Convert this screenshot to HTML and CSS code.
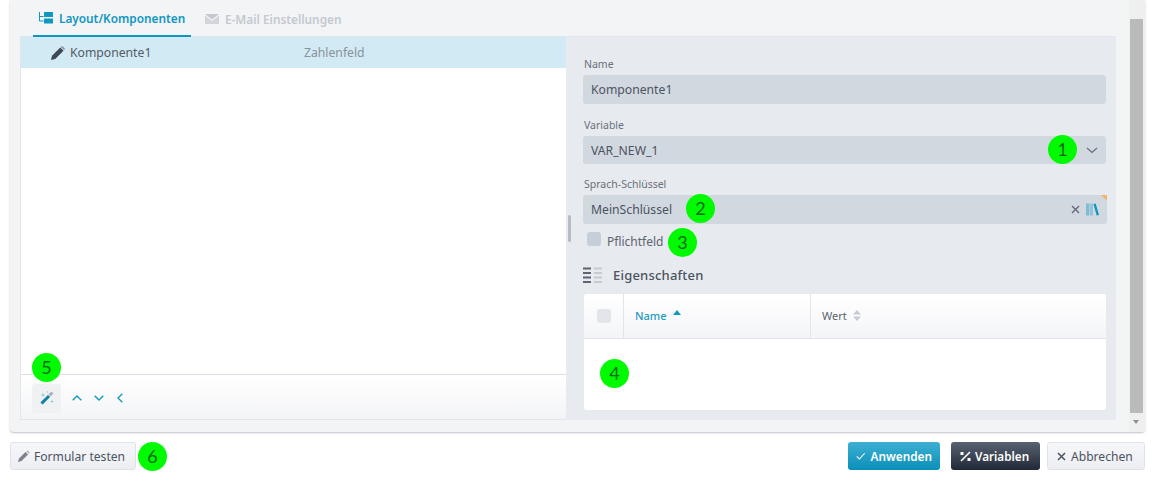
FILE: index.html
```html
<!DOCTYPE html>
<html lang="de">
<head>
<meta charset="utf-8">
<title>Formular</title>
<link rel="stylesheet" href="styles.css">
</head>
<body>
<main class="dialog">
  <div class="content">
    <nav class="tabs">
      <a class="tab active">
        <svg class="tab-icon" viewBox="0 0 14 12"><path d="M.5 0v9h4M.5 4.500h4" fill="none" stroke="#0e97c0"/><rect x="5" y="0" width="9" height="5" rx=".5" fill="#0e97c0"/><rect x="5" y="6.500" width="9" height="5" rx=".5" fill="#0e97c0"/></svg>
        Layout/Komponenten
      </a>
      <a class="tab muted">
        <svg class="tab-icon" viewBox="0 0 14 12"><path d="M0 1h14L7 6.500z" fill="#c4c9d0"/><path d="M0 2.500V11h14V2.500L7 8z" fill="#d2d6db"/></svg>
        E-Mail Einstellungen
      </a>
    </nav>
    <div class="split">
      <section class="list">
        <div class="row">
          <svg class="pencil" viewBox="0 0 14 14"><path d="M0 14l1-4.200L9.300 1.500l3.200 3.200L4.200 13z" fill="#3f4754"/><path d="M10.100.7c.6-.6 1.300-.6 1.900 0l1.300 1.300c.6.600.6 1.300 0 1.900l-.2.200-3.200-3.200z" fill="#8a919c"/></svg>
          <span class="row-name">Komponente1</span>
          <span class="row-type">Zahlenfeld</span>
        </div>
        <div class="list-space"></div>
        <div class="toolbar">
          <button class="wand">
            <svg viewBox="0 0 14 14" width="14" height="14"><path d="M1.500 12.500l7.500-7.500" stroke="#0e7fa8" stroke-width="3"/><path d="M9.500 4.500l3-3" stroke="#a9b2bd" stroke-width="3"/><path d="M3 2l.5 1.500L5 4l-1.500.500L3 6l-.5-1.500L1 4l1.500-.500zM12 9l.4 1.100 1.100.4-1.100.4L12 12l-.4-1.100-1.100-.4 1.100-.4zM7.500 0l.3.800.7.200-.7.300-.3.700-.3-.700L6.500 1l.700-.200z" fill="#6fb9d4"/></svg>
          </button>
          <button class="nav-btn"><svg viewBox="0 0 10 6" width="10" height="6"><path d="M.7 5.300L5 1l4.300 4.300" class="chev"/></svg></button>
          <button class="nav-btn"><svg viewBox="0 0 10 6" width="10" height="6"><path d="M.7.700L5 5l4.300-4.300" class="chev"/></svg></button>
          <button class="nav-btn"><svg viewBox="0 0 6 10" width="6" height="10"><path d="M5.300.700L1 5l4.300 4.300" class="chev"/></svg></button>
        </div>
      </section>
      <section class="detail">
        <span class="splitter"></span>
        <div class="field">
          <label class="label">Name</label>
          <div class="input">Komponente1</div>
        </div>
        <div class="field">
          <label class="label">Variable</label>
          <div class="input select">VAR_NEW_1
            <svg class="select-arrow" viewBox="0 0 12 7" width="12" height="7"><path d="M1 1l5 4.500L11 1" fill="none" stroke="#69717d" stroke-width="1.300"/></svg>
          </div>
        </div>
        <div class="field key-field">
          <label class="label">Sprach-Schlüssel</label>
          <div class="input key">MeinSchlüssel
            <span class="key-icons">
              <svg viewBox="0 0 9 9" width="9" height="9"><path d="M1 1l7 7M8 1L1 8" stroke="#5f6773" stroke-width="1.300"/></svg>
              <svg viewBox="0 0 14 13" width="13" height="13"><rect x="0" y="0" width="3.500" height="13" fill="#7fbcd6"/><rect x="4" y="0" width="3.500" height="13" fill="#8ec5dc"/><path d="M8 .5l2.400-.5L14 12.500l-2.500.5z" fill="#0e97c0"/></svg>
            </span>
            <span class="corner"></span>
          </div>
        </div>
        <label class="check-line"><span class="checkbox"></span><span>Pflichtfeld</span></label>
        <h2 class="section-title">
          <svg viewBox="0 0 20 16" width="20" height="16"><path d="M0 1.500h8M0 6h8M0 10.500h8M0 15h8" stroke="#5d6572" stroke-width="2"/><path d="M11 1.500h8M11 6h8M11 10.500h8M11 15h8" stroke="#c6cbd2" stroke-width="2"/></svg>
          Eigenschaften
        </h2>
        <div class="grid">
          <div class="grid-head">
            <div class="cell cell-check"><span class="checkbox light"></span></div>
            <div class="cell cell-name">Name <svg viewBox="0 0 8 5" width="8" height="5"><path d="M0 5l4-5 4 5z" fill="#0e97c0"/></svg></div>
            <div class="cell cell-value">Wert <svg viewBox="0 0 8 11" width="8" height="11"><path d="M0 4.500L4 0l4 4.500zM0 6.500L4 11l4-4.500z" fill="#c6cbd2"/></svg></div>
          </div>
        </div>
      </section>
    </div>
  </div>
  <aside class="scrollbar">
    <span class="thumb"></span>
    <span class="down"></span>
  </aside>
</main>
<footer class="actions">
  <button class="btn test">
    <svg viewBox="0 0 12 12" width="12" height="12"><path d="M0 12l1-3.500L7.500 2l2.500 2.500L3.500 11z" fill="#7b828d"/><path d="M8.300 1.200c.7-.7 1.300-.7 1.900-.1l.7.700c.6.600.6 1.200-.1 1.900z" fill="#a8aeb6"/></svg>
    Formular testen
  </button>
  <span class="spacer"></span>
  <button class="btn primary"><svg viewBox="0 0 12 10" width="12" height="10"><path d="M1 5.500l3.300 3.300L11 1.500" fill="none" stroke="#fff" stroke-width="1.300"/></svg>Anwenden</button>
  <button class="btn dark"><svg viewBox="0 0 11 11" width="11" height="11"><path d="M1 10l9-9" stroke="#fff" stroke-width="1.600"/><rect x="0.500" y="1" width="3" height="3" fill="#fff"/><rect x="7.500" y="7" width="3" height="3" fill="#fff"/></svg>Variablen</button>
  <button class="btn cancel"><svg viewBox="0 0 9 9" width="9" height="9"><path d="M1 1l7 7M8 1L1 8" stroke="#4b5360" stroke-width="1.500"/></svg>Abbrechen</button>
</footer>
<span class="mark m1">1</span>
<span class="mark m2">2</span>
<span class="mark m3">3</span>
<span class="mark m4">4</span>
<span class="mark m5">5</span>
<span class="mark m6">6</span>
</body>
</html>
```
FILE: styles.css
```css
* { box-sizing: border-box; }
html, body { height: 100%; }
body {
  margin: 0;
  background: #fff;
  font-family: "Noto Sans", "Open Sans", sans-serif;
  font-size: 12.200px;
  color: #4b5360;
  overflow: hidden;
  position: relative;
}
button { font: inherit; }

.dialog {
  height: 432px;
  margin: 0 9px 0 10px;
  display: flex;
  background: #f3f4f6;
  border-radius: 0 0 4px 4px;
  box-shadow: 0 1px 2px rgba(70, 80, 95, .35);
}
.content {
  flex: 1;
  min-width: 0;
  display: flex;
  flex-direction: column;
  padding: 0 13px 12px 10px;
}

.tabs {
  height: 37px;
  display: flex;
  border-bottom: 1px solid #e2e5ea;
  flex: none;
}
.tab {
  display: flex;
  align-items: center;
  gap: 6px;
  height: 37px;
  padding-top: 1px;
  font-size: 11.800px;
  font-weight: 600;
  white-space: nowrap;
}
.tab-icon { width: 14px; height: 12px; flex: none; }
.tab.active {
  color: #0e97c0;
  border-bottom: 2px solid #0e97c0;
  padding-left: 6px;
  margin-left: 13px;
  margin-right: 14px;
  width: 158px;
}
.tab.muted { color: #c5c9cf; }

.split { flex: 1; display: flex; min-height: 0; }

.list {
  width: 546px;
  background: #fff;
  display: flex;
  flex-direction: column;
  border-left: 1px solid #e2e5ea;
  border-bottom: 1px solid #e2e5ea;
}
.row {
  height: 31px;
  display: flex;
  align-items: center;
  background: #d2eaf3;
  padding-left: 30px;
  flex: none;
}
.pencil { width: 14px; height: 14px; margin-right: 5px; flex: none; }
.row-name { width: 234px; color: #535b67; }
.row-type { color: #8b929c; }
.list-space { flex: 1; }
.toolbar {
  height: 45px;
  flex: none;
  display: flex;
  align-items: center;
  padding: 0 0 0 11px;
  border-top: 1px solid #dde0e6;
  background: linear-gradient(#fff, #f3f4f6);
}
.wand {
  width: 29px;
  height: 29px;
  margin: 2px 5px 0 0;
  border: 0;
  border-radius: 3px;
  background: #f0f1f3;
  display: flex;
  align-items: center;
  justify-content: center;
  padding: 0;
}
.nav-btn {
  width: 22px;
  height: 20px;
  border: 0;
  padding: 0;
  background: none;
  display: flex;
  align-items: center;
  justify-content: center;
  margin-top: 1px;
}
.nav-btn:last-child { width: 20px; }
.chev { fill: none; stroke: #0e97c0; stroke-width: 1.300; }

.detail {
  flex: 1;
  min-width: 0;
  background: #e7eaee;
  padding: 20px 10px 10px 17px;
  position: relative;
  display: flex;
  flex-direction: column;
}
.splitter {
  position: absolute;
  left: 2px;
  top: 178px;
  width: 3px;
  height: 27px;
  border-radius: 2px;
  background: #b6bcc5;
}
.field { margin-bottom: 14px; }
.label {
  display: block;
  font-size: 10.500px;
  line-height: 14px;
  margin: 0 0 4px 1px;
  color: #6a717c;
}
.input {
  height: 29px;
  border-radius: 3px;
  background: #d2d8e0;
  padding: 0 8px;
  color: #4b5360;
  display: flex;
  align-items: center;
  position: relative;
}
.select { height: 28px; }
.select-arrow { margin-left: auto; }
.key-field { margin: -1px -1px 0 0; }
.key-icons {
  margin-left: auto;
  display: flex;
  align-items: center;
  gap: 6px;
}
.corner {
  position: absolute;
  right: 0;
  top: 0;
  width: 0;
  height: 0;
  border-top: 6px solid #eeb66f;
  border-left: 6px solid transparent;
}
.check-line {
  display: flex;
  align-items: center;
  gap: 6px;
  margin: 8px 0 0 4px;
  height: 18px;
  font-size: 12px;
  color: #5c6470;
}
.checkbox {
  width: 14px;
  height: 14px;
  border-radius: 3px;
  background: #c6ced7;
  display: block;
  margin-top: -5px;
}
.checkbox.light { background: #e2e5ea; margin-top: 0; }
.section-title {
  display: flex;
  align-items: center;
  gap: 10px;
  margin: 16px 0 10px;
  height: 18px;
  font-size: 13px;
  font-weight: 500;
  letter-spacing: .2px;
  color: #4b5360;
}
.grid {
  flex: 1;
  margin-left: 1px;
  background: #fff;
  border-radius: 3px;
  overflow: hidden;
}
.grid-head {
  height: 45px;
  display: flex;
  border-bottom: 1px solid #e2e5ea;
  background: linear-gradient(#fff, #f4f5f8);
  font-size: 11px;
}
.cell {
  display: flex;
  align-items: center;
  gap: 6px;
  padding-bottom: 1px;
  border-right: 1px solid #e2e5ea;
}
.cell-check { width: 40px; justify-content: center; }
.cell-name { width: 187px; padding-left: 11px; color: #1e9ac2; font-weight: 500; }
.cell-name svg { margin-top: -6px; }
.cell-value { flex: 1; border-right: 0; padding-left: 11px; color: #5c6470; }

.scrollbar {
  width: 16px;
  background: #efefef;
  position: relative;
  flex: none;
}
.thumb {
  position: absolute;
  left: 1px;
  top: 19px;
  width: 13px;
  height: 394px;
  background: #bababa;
}
.down {
  position: absolute;
  left: 4px;
  top: 420px;
  width: 0;
  height: 0;
  border-left: 3.500px solid transparent;
  border-right: 3.500px solid transparent;
  border-top: 4px solid #8f8f8f;
}

.actions {
  margin: 10px 9px 0 10px;
  display: flex;
}
.spacer { flex: 1; }
.btn {
  height: 28px;
  display: flex;
  align-items: center;
  gap: 4px;
  padding: 0 8px;
  border: 1px solid #dfe2e8;
  border-radius: 3px;
  background: linear-gradient(#f6f7f9, #eceef2);
  color: #4b5360;
  font-size: 12.100px;
  white-space: nowrap;
}
.btn.test { width: 126px; padding-left: 7px; }
.btn.primary {
  width: 92px;
  gap: 5px;
  margin-right: 11px;
  border: 0;
  background: linear-gradient(#3fafd3, #0a8fb9);
  color: #fff;
  font-size: 11.800px;
  font-weight: 600;
}
.btn.dark {
  width: 89px;
  padding-left: 9px;
  margin-right: 7px;
  border: 0;
  background: linear-gradient(#586270, #212938);
  color: #fff;
  font-size: 11.700px;
  font-weight: 600;
}
.btn.cancel { width: 98px; padding-left: 9px; gap: 5px; }

.mark {
  position: absolute;
  width: 29px;
  height: 29px;
  border-radius: 50%;
  background: #00fb00;
  color: #0a6a14;
  font-family: Lato, "Noto Sans", sans-serif;
  font-size: 18px;
  line-height: 29px;
  text-align: center;
}
.m1 { left: 1048px; top: 135px; }
.m2 { left: 686px; top: 194px; }
.m3 { left: 668px; top: 228px; }
.m4 { left: 600px; top: 359px; }
.m5 { left: 32px; top: 353px; }
.m6 { left: 138px; top: 442px; }
```
